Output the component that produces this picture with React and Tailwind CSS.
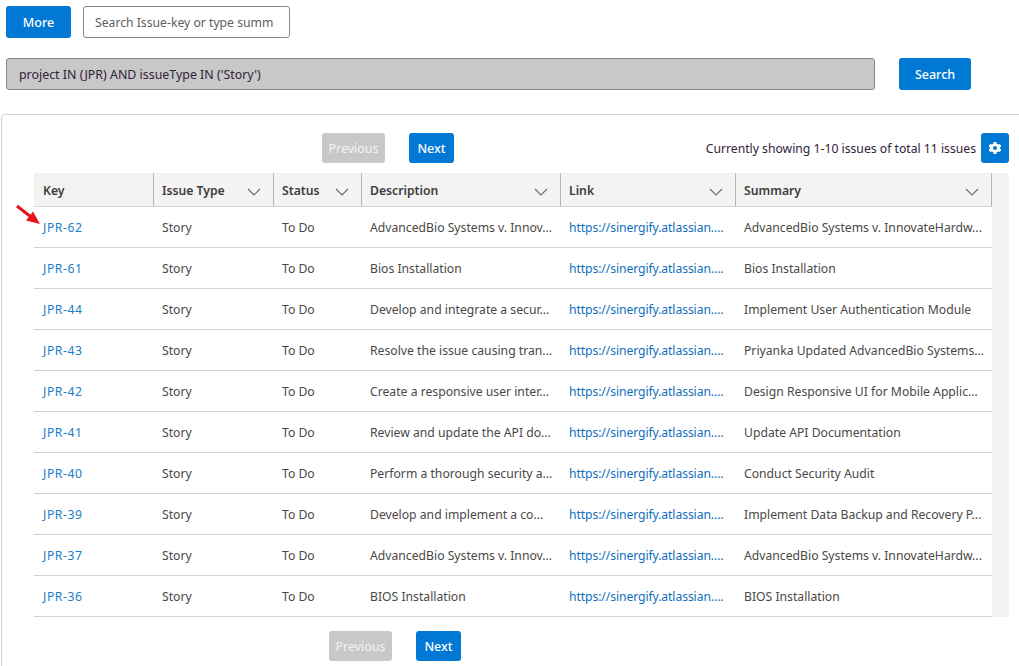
const ISSUES = [
  ['JPR-62', 'AdvancedBio Systems v. Innov...', 'AdvancedBio Systems v. InnovateHardw...'],
  ['JPR-61', 'Bios Installation', 'Bios Installation'],
  ['JPR-44', 'Develop and integrate a secur...', 'Implement User Authentication Module'],
  ['JPR-43', 'Resolve the issue causing tran...', 'Priyanka Updated AdvancedBio Systems...'],
  ['JPR-42', 'Create a responsive user inter...', 'Design Responsive UI for Mobile Applic...'],
  ['JPR-41', 'Review and update the API do...', 'Update API Documentation'],
  ['JPR-40', 'Perform a thorough security a...', 'Conduct Security Audit'],
  ['JPR-39', 'Develop and implement a co...', 'Implement Data Backup and Recovery P...'],
  ['JPR-37', 'AdvancedBio Systems v. Innov...', 'AdvancedBio Systems v. InnovateHardw...'],
  ['JPR-36', 'BIOS Installation', 'BIOS Installation'],
]

const COLUMNS = [
  { label: 'Key', width: 'w-[120px]', first: true },
  { label: 'Issue Type', width: 'w-[120px]', sort: true },
  { label: 'Status', width: 'w-[88px]', sort: true },
  { label: 'Description', width: 'w-[199px]', sort: true },
  { label: 'Link', width: 'w-[175px]', sort: true },
  { label: 'Summary', width: 'w-[256px]', sort: true },
]

function Chevron() {
  return (
    <svg width="14" height="8" viewBox="0 0 14 8" className="mt-[1px] text-[#6b6967]">
      <path d="M1 1 L7 7 L13 1" stroke="currentColor" strokeWidth="1.1" fill="none" />
    </svg>
  )
}

function Gear() {
  return (
    <svg width="14" height="14" viewBox="0 0 14 14">
      <path
        fillRule="evenodd"
        fill="white"
        d="M5.6 1 H8.4 L8.8 2.7 L10.2 3.5 L11.9 3 L13.3 5.4 L12 6.6 V7.4 L13.3 8.6 L11.9 11 L10.2 10.5 L8.8 11.3 L8.4 13 H5.6 L5.2 11.3 L3.8 10.5 L2.1 11 L0.7 8.6 L2 7.4 V6.6 L0.7 5.4 L2.1 3 L3.8 3.5 L5.2 2.7 Z M7 5 A2 2 0 1 0 7 9 A2 2 0 1 0 7 5 Z"
      />
    </svg>
  )
}

function Button({ children, className = '' }) {
  return (
    <button className={`h-[32px] rounded-[3px] bg-[#0078d4] pt-[2px] text-[12.5px] font-medium text-white ${className}`}>
      {children}
    </button>
  )
}

function Pager({ className = '' }) {
  return (
    <div className={`flex items-center gap-[24px] ${className}`}>
      <button className="h-[30px] w-[63px] rounded-[3px] bg-[#c8c8c8] pt-[2px] text-[12.5px] text-[#f4f4f4]">Previous</button>
      <button className="h-[30px] w-[45px] rounded-[3px] bg-[#0078d4] pt-[2px] text-[12.5px] font-medium text-white">Next</button>
    </div>
  )
}

function Cell({ width, children, className = '' }) {
  return (
    <div className={`${width} shrink-0 whitespace-nowrap px-[8px] ${className}`}>{children}</div>
  )
}

export default function App() {
  return (
    <div className="relative h-[666px] w-[1019px] overflow-hidden bg-white font-['Noto_Sans',sans-serif] text-[12.2px] text-[#323130]">
      {/* Barre de recherche */}
      <div className="flex items-center gap-[12px] pl-[6px] pt-[6px]">
        <Button className="w-[65px]">More</Button>
        <div className="flex h-[32px] w-[207px] items-center whitespace-nowrap rounded-[3px] border border-[#8a8886] px-[11px] pt-[2px] text-[#605e5c]">
          Search Issue-key or type summ
        </div>
      </div>

      <div className="mt-[20px] flex items-center gap-[24px] pl-[6px]">
        <div className="flex h-[32px] w-[869px] items-center rounded-[3px] border border-[#8a8886] bg-[#c8c8c8] px-[12px] pt-[2px] text-[12.4px] text-[#32213a]">
          project IN (JPR) AND issueType IN ('Story')
        </div>
        <Button className="w-[72px]">Search</Button>
      </div>

      {/* Carte des résultats */}
      <div className="ml-[1px] mt-[24px] h-[600px] w-[1040px] rounded-[4px] border border-[#d1d1d1] pl-[32px] pt-[18px]">
        <div className="flex h-[30px] w-[975px] items-center">
          <Pager className="ml-[288px]" />
          <div className="ml-auto flex items-center gap-[5px]">
            <span className="pt-[2px] text-[#32213a]">Currently showing 1-10 issues of total 11 issues</span>
            <span className="flex h-[30px] w-[28px] items-center justify-center rounded-[3px] bg-[#0078d4]">
              <Gear />
            </span>
          </div>
        </div>

        <div className="mt-[10px] w-[975px] bg-[#f3f3f3]">
          <div className="flex h-[34px] w-[958px] items-center border-b border-[#d4d4d4] font-semibold">
            {COLUMNS.map((col) => (
              <div
                key={col.label}
                className={`${col.width} ${col.first ? 'pl-[9px]' : 'pl-[8px]'} flex h-full shrink-0 items-center justify-between border-r border-[#b5b5b5] pr-[12px] pt-[3px] text-[#403c3a]`}
              >
                {col.label}
                {col.sort && <Chevron />}
              </div>
            ))}
          </div>
          {ISSUES.map(([key, description, summary]) => (
            <div key={key} className="flex h-[41px] w-[958px] items-center border-b border-[#d1d1d1] bg-white pt-[2px] text-[#4a4846]">
              <Cell width="w-[120px]" className="pl-[9px] tracking-[0.55px] text-[#1b7cc9]">{key}</Cell>
              <Cell width="w-[120px]">Story</Cell>
              <Cell width="w-[88px]">To Do</Cell>
              <Cell width="w-[199px]">{description}</Cell>
              <Cell width="w-[175px]" className="tracking-[-0.1px] text-[#106ebe]">https://sinergify.atlassian....</Cell>
              <Cell width="w-[256px]">{summary}</Cell>
            </div>
          ))}
        </div>

        <Pager className="ml-[295px] mt-[14px]" />
      </div>

      {/* Flèche d'annotation */}
      <svg className="absolute left-[14px] top-[203px]" width="28" height="22" viewBox="0 0 28 22">
        <path d="M3 3 L17 14" stroke="#e8141c" strokeWidth="3" fill="none" />
        <path d="M26 21 L12 17.5 L19 8.5 Z" fill="#e8141c" />
      </svg>
    </div>
  )
}
